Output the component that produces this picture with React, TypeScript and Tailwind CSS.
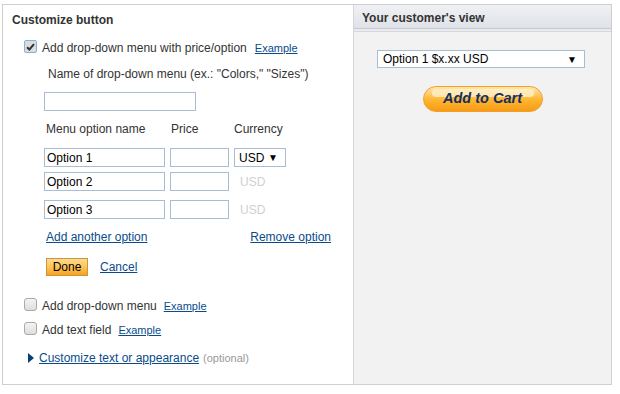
import type { ReactNode } from 'react'

const font = { fontFamily: '"Liberation Sans", Arial, sans-serif' }

function Checkbox({ checked }: { checked?: boolean }) {
  if (checked) {
    return (
      <span className="flex h-[13px] w-[13px] items-center justify-center rounded-[2px] border border-[#7fb2e5] bg-[#dcdcdc]">
        <svg width="9" height="8" viewBox="0 0 9 8">
          <path d="M1 4.2 L3.4 6.5 L8 1.2" fill="none" stroke="#333" strokeWidth="2" />
        </svg>
      </span>
    )
  }
  return (
    <span className="block h-[13px] w-[13px] rounded-[3px] border border-[#a9a9a9] bg-gradient-to-b from-[#f4f4f4] to-[#dedede]" />
  )
}

function Example({ children }: { children: ReactNode }) {
  return <span className="text-[11px] text-[#0a4b8c] underline">{children}</span>
}

function Input({ w, value }: { w: string; value?: string }) {
  return (
    <div className={`${w} flex h-[19px] items-center border border-[#a8bcd4] bg-white pl-[2px] text-[12px] text-black`}>
      {value}
    </div>
  )
}

export default function App() {
  return (
    <div style={font} className="h-[394px] w-[620px] bg-white pl-[2px] pt-[4px] text-[12px] text-[#333]">
      <div className="flex h-[381px] w-[610px] border border-[#cfcfcf]">
        {/* left: button settings */}
        <div className="flex w-[351px] flex-col border-r border-[#d8d8d8] pl-[9px]">
          <div className="mt-[7px] flex h-[16px] items-center font-bold">Customize button</div>

          <div className="ml-[12px] mt-[12px] flex h-[16px] items-center">
            <span className="-mt-[3px] block">
              <Checkbox checked />
            </span>
            <span className="ml-[5px]">Add drop-down menu with price/option</span>
            <span className="ml-[8px]">
              <Example>Example</Example>
            </span>
          </div>

          <div className="ml-[36px] mt-[10px] flex h-[16px] items-center">
            Name of drop-down menu (ex.: "Colors," "Sizes")
          </div>

          <div className="ml-[32px] mt-[10px]">
            <Input w="w-[152px]" />
          </div>

          <div className="ml-[34px] mt-[10px] flex h-[16px] items-center">
            <span className="w-[125px]">Menu option name</span>
            <span className="w-[63px]">Price</span>
            <span>Currency</span>
          </div>

          <div className="ml-[32px] mt-[11px] flex gap-[5px]">
            <Input w="w-[121px]" value="Option 1" />
            <Input w="w-[59px]" />
            <div className="flex h-[19px] w-[52px] items-center justify-between border border-[#a8bcd4] bg-white pl-[4px] pr-[7px] text-[12px] text-black">
              <span>USD</span>
              <span className="text-[10px]">▼</span>
            </div>
          </div>

          <div className="ml-[32px] mt-[5px] flex gap-[5px]">
            <Input w="w-[121px]" value="Option 2" />
            <Input w="w-[59px]" />
            <span className="ml-[6px] mt-[1px] text-[12px] text-[#d0d0d0]">USD</span>
          </div>

          <div className="ml-[32px] mt-[9px] flex gap-[5px]">
            <Input w="w-[121px]" value="Option 3" />
            <Input w="w-[59px]" />
            <span className="ml-[6px] mt-[1px] text-[12px] text-[#d0d0d0]">USD</span>
          </div>

          <div className="ml-[34px] mt-[10px] flex h-[16px] w-[285px] items-center justify-between text-[#0a4b8c]">
            <span className="underline">Add another option</span>
            <span className="underline">Remove option</span>
          </div>

          <div className="ml-[34px] mt-[13px] flex h-[18px] items-center">
            <span className="flex h-[18px] w-[42px] items-center justify-center border border-[#c9953f] bg-gradient-to-b from-[#ffdb8e] via-[#ffc457] to-[#f5a21c] text-[12px] text-black">
              Done
            </span>
            <span className="ml-[12px] text-[#0a4b8c] underline">Cancel</span>
          </div>

          <div className="ml-[12px] mt-[22px] flex h-[16px] items-center">
            <span className="-mt-[3px] block">
              <Checkbox />
            </span>
            <span className="ml-[5px]">Add drop-down menu</span>
            <span className="ml-[7px]">
              <Example>Example</Example>
            </span>
          </div>

          <div className="ml-[12px] mt-[8px] flex h-[16px] items-center">
            <span className="-mt-[3px] block">
              <Checkbox />
            </span>
            <span className="ml-[5px]">Add text field</span>
            <span className="ml-[7px]">
              <Example>Example</Example>
            </span>
          </div>

          <div className="ml-[16px] mt-[12px] flex h-[16px] items-center">
            <svg width="6" height="10" viewBox="0 0 6 10">
              <path d="M0 0 L6 5 L0 10 Z" fill="#0a3d73" />
            </svg>
            <span className="ml-[5px] text-[#0a4b8c] underline">Customize text or appearance</span>
            <span className="ml-[4px] text-[11px] text-[#999]">(optional)</span>
          </div>
        </div>

        {/* right: preview */}
        <div className="flex flex-1 flex-col bg-[#f2f2f2]">
          <div className="flex h-[24px] items-center border-b border-[#c6cad0] bg-gradient-to-b from-[#f0f1f4] to-[#dfe2e7] pl-[8px] pt-[2px] font-bold">
            Your customer's view
          </div>
          <div className="h-[3px] border-b border-[#d5d8dc] bg-[#e9ebee]" />

          <div className="ml-[23px] mt-[18px] flex h-[18px] w-[208px] items-center justify-between border border-[#a8bcd4] bg-white pl-[5px] pr-[7px] text-[12px] text-black">
            <span>Option 1 $x.xx USD</span>
            <span className="text-[10px]">▼</span>
          </div>

          <div className="mt-[18px] flex justify-center">
            <div className="relative flex h-[26px] w-[120px] items-center justify-center overflow-hidden rounded-full border border-[#f0a030] bg-gradient-to-b from-[#ffe7a8] via-[#ffb832] to-[#f89a12]">
              <div className="absolute left-[8px] right-[8px] top-[2px] h-[8px] rounded-full bg-[#fff3d6] opacity-70" />
              <span className="relative text-[14.5px] font-bold italic text-[#122f63]">Add to Cart</span>
            </div>
          </div>
        </div>
      </div>
    </div>
  )
}
